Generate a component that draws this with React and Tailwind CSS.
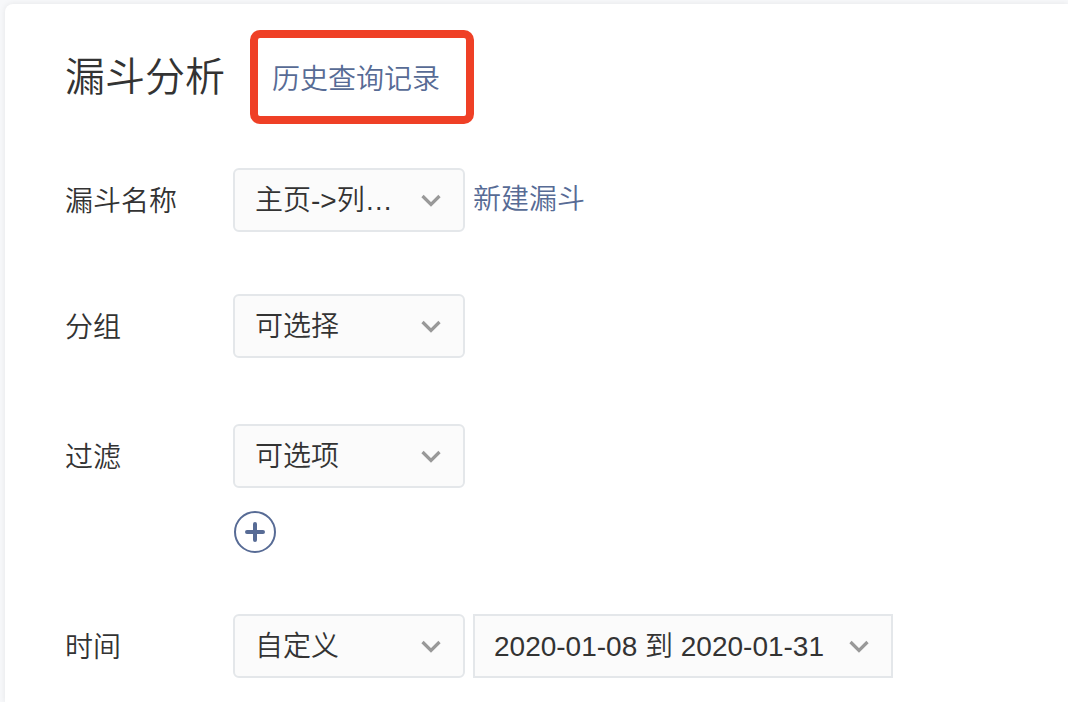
import { clsx } from 'clsx'

function Chevron() {
  return (
    <svg
      viewBox="0 0 20 14"
      aria-hidden="true"
      className="pointer-events-none col-start-1 row-start-1 mt-0.5 mr-6 h-3.5 w-5 self-center justify-self-end"
    >
      <path d="M1.5 2 L10 10.5 L18.5 2" fill="none" stroke="#999999" strokeWidth="3.2" />
    </svg>
  )
}

function SelectBox({ id, label, value, wide }) {
  return (
    <div className={clsx('grid h-16 shrink-0', wide ? 'w-[420px]' : 'w-[232px]')}>
      <select
        id={id}
        aria-label={label}
        className={clsx(
          'col-start-1 row-start-1 w-full appearance-none border-2 border-[#e4e7ea] bg-[#fbfbfb] pt-0.5 text-[28px] text-[#333333]',
          wide ? 'pl-[19px]' : 'rounded-md pl-5'
        )}
      >
        <option>{value}</option>
      </select>
      <Chevron />
    </div>
  )
}

function FormRow({ id, label, children }) {
  return (
    <div className="flex items-start">
      <label htmlFor={id} className="flex h-16 w-[168px] shrink-0 items-center pt-1">
        {label}
      </label>
      <div className="flex flex-col gap-[23px]">{children}</div>
    </div>
  )
}

export default function App() {
  return (
    <div className="min-h-screen bg-[#f7f8fa] pt-1 pl-[5px] font-['Liberation_Sans','Noto_Sans_CJK_SC',sans-serif] text-[28px] leading-10 font-[350] text-[#333333]">
      <main className="min-h-[calc(100vh-4px)] rounded-tl-lg bg-white pt-[26px] pb-6 pl-[60px] shadow-[0_0_6px_rgba(0,0,0,0.08)]">
        <header className="flex items-center gap-[25px]">
          <h1 className="text-[40px] leading-[60px] font-[350]">漏斗分析</h1>
          <div className="flex h-[94px] items-center rounded-[10px] border-8 border-[#ef4026] pt-1.5 pr-[26px] pl-3.5">
            <a href="#history" className="text-[#576b95]">历史查询记录</a>
          </div>
        </header>

        <form className="mt-11">
          <FormRow id="funnel" label="漏斗名称">
            <div className="flex gap-2">
              <SelectBox id="funnel" value="主页->列…" />
              <a href="#new" className="mt-3 text-[#576b95]">新建漏斗</a>
            </div>
          </FormRow>

          <div className="mt-[62px]">
            <FormRow id="group" label="分组">
              <SelectBox id="group" value="可选择" />
            </FormRow>
          </div>

          <div className="mt-[66px]">
            <FormRow id="filter" label="过滤">
              <SelectBox id="filter" value="可选项" />
              <button
                type="button"
                aria-label="添加过滤"
                className="ml-px flex size-[42px] items-center justify-center rounded-full border-2 border-[#576b95]"
              >
                <svg viewBox="0 0 20 20" className="size-5">
                  <path d="M10 2 V18 M2 10 H18" fill="none" stroke="#576b95" strokeWidth="4" strokeLinecap="round" />
                </svg>
              </button>
            </FormRow>
          </div>

          <div className="mt-[61px]">
            <FormRow id="period" label="时间">
              <div className="flex gap-2">
                <SelectBox id="period" value="自定义" />
                <SelectBox id="range" label="日期范围" value="2020-01-08 到 2020-01-31" wide />
              </div>
            </FormRow>
          </div>
        </form>
      </main>
    </div>
  )
}
